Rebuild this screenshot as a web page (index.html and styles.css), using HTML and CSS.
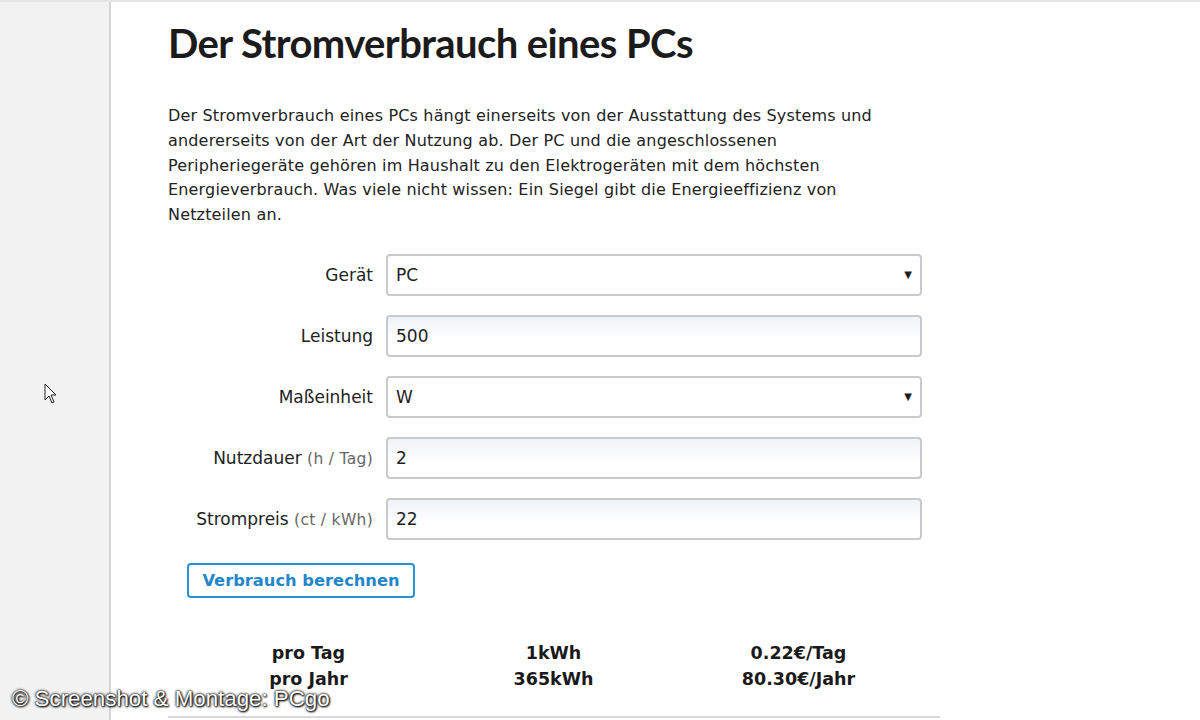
FILE: index.html
```html
<!DOCTYPE html>
<html lang="de">
<head>
    <meta charset="UTF-8">
    <title>Stromverbrauch</title>
    <link rel="stylesheet" href="styles.css">
</head>
<body>
    <div class="page">
        <!-- Linke Leiste -->
        <div class="sidebar">
            <svg class="cursor" width="14" height="22" viewBox="0 0 14 22">
                <path d="M1 1 L1 17 L5 13 L8 20 L10 19 L7 12 L12 12 Z" fill="#fff" stroke="#222" stroke-width="1"/>
            </svg>
        </div>

        <!-- Inhalt -->
        <div class="content">
            <h1>Der Stromverbrauch eines PCs</h1>
            <p class="intro">Der Stromverbrauch eines PCs hängt einerseits von der Ausstattung des Systems und andererseits von der Art der Nutzung ab. Der PC und die angeschlossenen Peripheriegeräte gehören im Haushalt zu den Elektrogeräten mit dem höchsten Energieverbrauch. Was viele nicht wissen: Ein Siegel gibt die Energieeffizienz von Netzteilen an.</p>

            <form class="calc">
                <div class="row">
                    <label>Gerät</label>
                    <div class="field select">PC<span class="arrow">▼</span></div>
                </div>
                <div class="row">
                    <label>Leistung</label>
                    <div class="field input">500</div>
                </div>
                <div class="row">
                    <label>Maßeinheit</label>
                    <div class="field select">W<span class="arrow">▼</span></div>
                </div>
                <div class="row">
                    <label>Nutzdauer <small>(h / Tag)</small></label>
                    <div class="field input">2</div>
                </div>
                <div class="row">
                    <label>Strompreis <small>(ct / kWh)</small></label>
                    <div class="field input">22</div>
                </div>
                <button type="button" class="calc-button">Verbrauch berechnen</button>
            </form>

            <div class="results">
                <span>pro Tag</span><span>1kWh</span><span>0.22€/Tag</span>
                <span>pro Jahr</span><span>365kWh</span><span>80.30€/Jahr</span>
            </div>
            <div class="bottom-line"></div>
        </div>
    </div>

    <div class="credit">© Screenshot &amp; Montage: PCgo</div>
</body>
</html>
```

FILE: styles.css
```css
/* Allgemein */
body {
    margin: 0;
    font-family: "DejaVu Sans", Verdana, sans-serif;
    background-color: #ffffff;
    color: #1e1e1e;
}

.page {
    display: flex;
    height: 720px;
    border-top: 2px solid #e4e4e4;
    box-sizing: border-box;
    overflow: hidden;
}

/* Linke Leiste */
.sidebar {
    position: relative;
    width: 109px;
    background-color: #f2f2f2;
    border-right: 2px solid #d4d4d4;
    flex-shrink: 0;
}

.cursor {
    position: absolute;
    left: 44px;
    top: 381px;
}

/* Inhalt */
.content {
    width: 772px;
    padding-left: 57px;
}

h1 {
    font-family: Lato, sans-serif;
    font-weight: 700;
    font-size: 40px;
    letter-spacing: -0.6px;
    color: #1b1b1b;
    margin: 17px 0 0 0;
}

.intro {
    font-size: 16px;
    line-height: 24.75px;
    letter-spacing: 0.17px;
    width: 720px;
    margin: 37px 0 26px 0;
    color: #222;
}

/* Formular */
.calc {
    width: 754px;
}

.row {
    display: flex;
    align-items: center;
    margin-bottom: 19px;
}

.row label {
    width: 205px;
    text-align: right;
    padding-right: 13px;
    font-size: 17px;
    color: #222;
}

.row label small {
    font-size: 15.5px;
    letter-spacing: 0.3px;
    color: #666;
}

.field {
    position: relative;
    box-sizing: border-box;
    width: 536px;
    height: 42px;
    border: 2px solid #c8cacd;
    border-radius: 4px;
    padding: 0 0 0 8px;
    display: flex;
    align-items: center;
    font-size: 17px;
    color: #1e1e1e;
}

.input {
    background: linear-gradient(#eff2f6, #ffffff 60%);
}

.arrow {
    position: absolute;
    right: 8px;
    font-size: 10px;
}

.calc-button {
    margin: 4px 0 0 19px;
    width: 228px;
    height: 35px;
    background-color: #ffffff;
    border: 2px solid #2b8fd4;
    border-radius: 4px;
    color: #1f86c9;
    font-family: "DejaVu Sans", Verdana, sans-serif;
    font-weight: bold;
    font-size: 16.3px;
    cursor: pointer;
}

/* Ergebnisse */
.results {
    display: grid;
    grid-template-columns: repeat(3, 245px);
    margin: 42px 0 0 18px;
    line-height: 26px;
    font-weight: bold;
    font-size: 17.5px;
    text-align: center;
    color: #1a1a1a;
}

.bottom-line {
    width: 772px;
    border-top: 2px solid #d8d8d8;
    margin-top: 24px;
}

/* Bildnachweis */
.credit {
    position: absolute;
    left: 12px;
    top: 687px;
    font-family: "Liberation Sans", Arial, sans-serif;
    font-size: 22.3px;
    line-height: 24px;
    color: #ffffff;
    text-shadow: 0 0 2px #000, 0 0 3px #000, 1px 1px 2px #000;
}
```
